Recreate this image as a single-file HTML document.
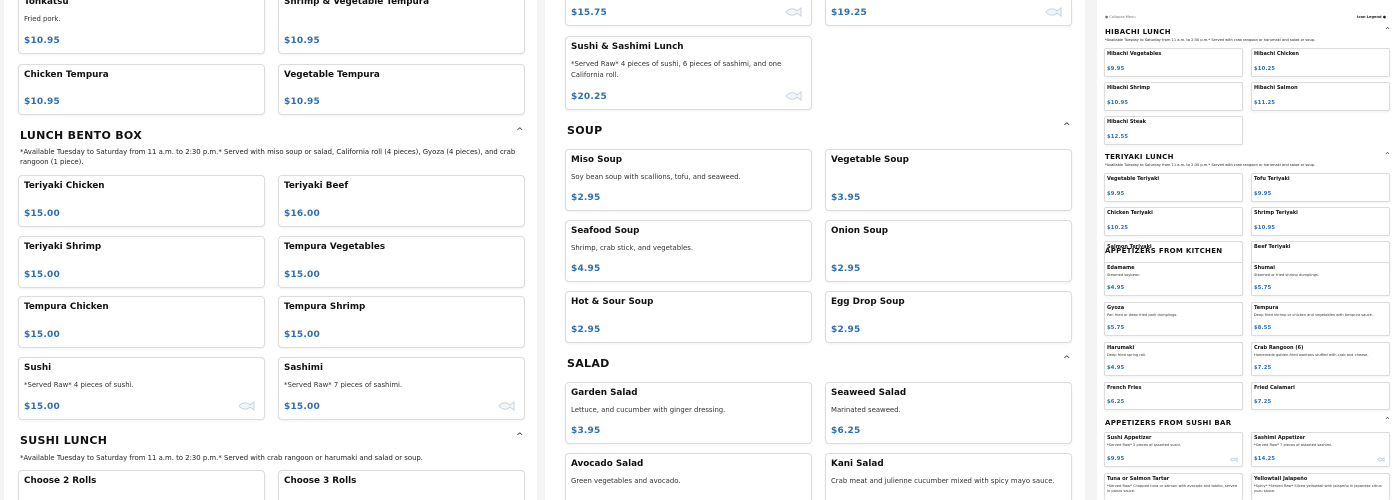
<!DOCTYPE html><html><head><meta charset="utf-8"><style>
*{margin:0;padding:0;box-sizing:border-box}
html,body{width:1400px;height:500px;overflow:hidden}
body{background:#f4f4f4;font-family:"DejaVu Sans","Liberation Sans",sans-serif;position:relative;color:#111}
#w{position:absolute;left:0;top:0;width:1400px;height:500px;overflow:hidden}
.p{position:absolute;top:0;height:500px;background:#fff}
.c{position:absolute;background:#fff;border:1px solid #dcdcdc;border-radius:4px;box-shadow:0 1px 2px rgba(0,0,0,.06)}
.c .t{position:absolute;left:5px;top:4px;font-size:8.8px;font-weight:bold;line-height:12px;white-space:nowrap}
.c .d{position:absolute;left:5px;top:22px;right:14px;font-size:6.9px;line-height:11px;color:#333}
.c .pr{position:absolute;left:5px;bottom:6px;font-size:9px;font-weight:bold;color:#2e6fae;line-height:12px;letter-spacing:.2px}
.c svg{position:absolute;right:8px;bottom:8px}
.h{position:absolute;font-size:11px;font-weight:bold;letter-spacing:.3px;white-space:nowrap;line-height:14px}
.cap{position:absolute;font-size:6.9px;line-height:10px;color:#222}
.ch{position:absolute;font-size:9px;color:#333}
.s .c{border-radius:2px}
.s .c .t{font-size:5px;left:2px;top:2px;line-height:7px}
.s .c .d{font-size:3.6px;left:2px;top:10px;line-height:5px;right:3px}
.s .c .pr{font-size:5.2px;left:2px;bottom:3px;line-height:7px}
.s .h{font-size:7px}
.s .cap{font-size:3.6px;line-height:5px}
</style></head><body><div id="w">
<div class="p" style="left:4px;width:533px"></div>
<div class="p" style="left:545px;width:540px"></div>
<div class="p" style="left:1097px;width:303px"></div>

<!-- left -->
<div class="c" style="left:18px;top:-9px;width:247px;height:63px"><div class="t">Tonkatsu</div><div class="d">Fried pork.</div><div class="pr">$10.95</div></div>
<div class="c" style="left:278px;top:-9px;width:247px;height:63px"><div class="t">Shrimp &amp; Vegetable Tempura</div><div class="pr">$10.95</div></div>
<div class="c" style="left:18px;top:64px;width:247px;height:51px"><div class="t">Chicken Tempura</div><div class="pr">$10.95</div></div>
<div class="c" style="left:278px;top:64px;width:247px;height:51px"><div class="t">Vegetable Tempura</div><div class="pr">$10.95</div></div>
<div class="h" style="left:20px;top:129px">LUNCH BENTO BOX</div><div class="ch" style="left:516px;top:127px">^</div>
<div class="cap" style="left:20px;top:147px;width:505px">*Available Tuesday to Saturday from 11 a.m. to 2:30 p.m.* Served with miso soup or salad, California roll (4 pieces), Gyoza (4 pieces), and crab rangoon (1 piece).</div>
<div class="c" style="left:18px;top:175px;width:247px;height:52px"><div class="t">Teriyaki Chicken</div><div class="pr">$15.00</div></div>
<div class="c" style="left:278px;top:175px;width:247px;height:52px"><div class="t">Teriyaki Beef</div><div class="pr">$16.00</div></div>
<div class="c" style="left:18px;top:236px;width:247px;height:52px"><div class="t">Teriyaki Shrimp</div><div class="pr">$15.00</div></div>
<div class="c" style="left:278px;top:236px;width:247px;height:52px"><div class="t">Tempura Vegetables</div><div class="pr">$15.00</div></div>
<div class="c" style="left:18px;top:296px;width:247px;height:52px"><div class="t">Tempura Chicken</div><div class="pr">$15.00</div></div>
<div class="c" style="left:278px;top:296px;width:247px;height:52px"><div class="t">Tempura Shrimp</div><div class="pr">$15.00</div></div>
<div class="c" style="left:18px;top:357px;width:247px;height:63px"><div class="t">Sushi</div><div class="d">*Served Raw* 4 pieces of sushi.</div><div class="pr">$15.00</div><svg width="18" height="10" viewBox="0 0 18 10"><path d="M1 5C4 1 9 1 12 4L16 1V9L12 6C9 9 4 9 1 5Z" fill="#f3f6f9" stroke="#c9d3dd"/></svg></div>
<div class="c" style="left:278px;top:357px;width:247px;height:63px"><div class="t">Sashimi</div><div class="d">*Served Raw* 7 pieces of sashimi.</div><div class="pr">$15.00</div><svg width="18" height="10" viewBox="0 0 18 10"><path d="M1 5C4 1 9 1 12 4L16 1V9L12 6C9 9 4 9 1 5Z" fill="#f3f6f9" stroke="#c9d3dd"/></svg></div>
<div class="h" style="left:20px;top:434px">SUSHI LUNCH</div><div class="ch" style="left:516px;top:432px">^</div>
<div class="cap" style="left:20px;top:453px">*Available Tuesday to Saturday from 11 a.m. to 2:30 p.m.* Served with crab rangoon or harumaki and salad or soup.</div>
<div class="c" style="left:18px;top:470px;width:247px;height:30px;border-bottom:0;border-radius:4px 4px 0 0"><div class="t">Choose 2 Rolls</div></div>
<div class="c" style="left:278px;top:470px;width:247px;height:30px;border-bottom:0;border-radius:4px 4px 0 0"><div class="t">Choose 3 Rolls</div></div>

<!-- middle -->
<div class="c" style="left:565px;top:0;width:247px;height:26px;border-top:0;border-radius:0 0 4px 4px"><div class="pr">$15.75</div><svg width="18" height="10" viewBox="0 0 18 10"><path d="M1 5C4 1 9 1 12 4L16 1V9L12 6C9 9 4 9 1 5Z" fill="#f3f6f9" stroke="#c9d3dd"/></svg></div>
<div class="c" style="left:825px;top:0;width:247px;height:26px;border-top:0;border-radius:0 0 4px 4px"><div class="pr">$19.25</div><svg width="18" height="10" viewBox="0 0 18 10"><path d="M1 5C4 1 9 1 12 4L16 1V9L12 6C9 9 4 9 1 5Z" fill="#f3f6f9" stroke="#c9d3dd"/></svg></div>
<div class="c" style="left:565px;top:36px;width:247px;height:74px"><div class="t">Sushi &amp; Sashimi Lunch</div><div class="d" style="right:20px">*Served Raw* 4 pieces of sushi, 6 pieces of sashimi, and one California roll.</div><div class="pr">$20.25</div><svg width="18" height="10" viewBox="0 0 18 10"><path d="M1 5C4 1 9 1 12 4L16 1V9L12 6C9 9 4 9 1 5Z" fill="#f3f6f9" stroke="#c9d3dd"/></svg></div>
<div class="h" style="left:567px;top:124px">SOUP</div><div class="ch" style="left:1063px;top:122px">^</div>
<div class="c" style="left:565px;top:149px;width:247px;height:62px"><div class="t">Miso Soup</div><div class="d">Soy bean soup with scallions, tofu, and seaweed.</div><div class="pr">$2.95</div></div>
<div class="c" style="left:825px;top:149px;width:247px;height:62px"><div class="t">Vegetable Soup</div><div class="pr">$3.95</div></div>
<div class="c" style="left:565px;top:220px;width:247px;height:62px"><div class="t">Seafood Soup</div><div class="d">Shrimp, crab stick, and vegetables.</div><div class="pr">$4.95</div></div>
<div class="c" style="left:825px;top:220px;width:247px;height:62px"><div class="t">Onion Soup</div><div class="pr">$2.95</div></div>
<div class="c" style="left:565px;top:291px;width:247px;height:52px"><div class="t">Hot &amp; Sour Soup</div><div class="pr">$2.95</div></div>
<div class="c" style="left:825px;top:291px;width:247px;height:52px"><div class="t">Egg Drop Soup</div><div class="pr">$2.95</div></div>
<div class="h" style="left:567px;top:357px">SALAD</div><div class="ch" style="left:1063px;top:355px">^</div>
<div class="c" style="left:565px;top:382px;width:247px;height:62px"><div class="t">Garden Salad</div><div class="d">Lettuce, and cucumber with ginger dressing.</div><div class="pr">$3.95</div></div>
<div class="c" style="left:825px;top:382px;width:247px;height:62px"><div class="t">Seaweed Salad</div><div class="d">Marinated seaweed.</div><div class="pr">$6.25</div></div>
<div class="c" style="left:565px;top:453px;width:247px;height:47px;border-bottom:0;border-radius:4px 4px 0 0"><div class="t">Avocado Salad</div><div class="d">Green vegetables and avocado.</div></div>
<div class="c" style="left:825px;top:453px;width:247px;height:47px;border-bottom:0;border-radius:4px 4px 0 0"><div class="t">Kani Salad</div><div class="d">Crab meat and julienne cucumber mixed with spicy mayo sauce.</div></div>

<!-- right small -->
<div class="s">
<div class="cap" style="left:1105px;top:15px;color:#777">● Collapse Menu</div>
<div class="cap" style="left:1357px;top:15px;font-weight:bold">Icon Legend ●</div>
<div class="h" style="left:1105px;top:25px">HIBACHI LUNCH</div><div class="cap" style="left:1385px;top:28px;font-size:6px">^</div>
<div class="cap" style="left:1105px;top:38px">*Available Tuesday to Saturday from 11 a.m. to 2:30 p.m.* Served with crab rangoon or harumaki and salad or soup.</div>
<div class="c" style="left:1104px;top:48px;width:139px;height:29px"><div class="t">Hibachi Vegetables</div><div class="pr">$9.95</div></div>
<div class="c" style="left:1251px;top:48px;width:139px;height:29px"><div class="t">Hibachi Chicken</div><div class="pr">$10.25</div></div>
<div class="c" style="left:1104px;top:82px;width:139px;height:29px"><div class="t">Hibachi Shrimp</div><div class="pr">$10.95</div></div>
<div class="c" style="left:1251px;top:82px;width:139px;height:29px"><div class="t">Hibachi Salmon</div><div class="pr">$11.25</div></div>
<div class="c" style="left:1104px;top:116px;width:139px;height:29px"><div class="t">Hibachi Steak</div><div class="pr">$12.55</div></div>
<div class="h" style="left:1105px;top:150px">TERIYAKI LUNCH</div><div class="cap" style="left:1385px;top:153px;font-size:6px">^</div>
<div class="cap" style="left:1105px;top:163px">*Available Tuesday to Saturday from 11 a.m. to 2:30 p.m.* Served with crab rangoon or harumaki and salad or soup.</div>
<div class="c" style="left:1104px;top:173px;width:139px;height:29px"><div class="t">Vegetable Teriyaki</div><div class="pr">$9.95</div></div>
<div class="c" style="left:1251px;top:173px;width:139px;height:29px"><div class="t">Tofu Teriyaki</div><div class="pr">$9.95</div></div>
<div class="c" style="left:1104px;top:207px;width:139px;height:29px"><div class="t">Chicken Teriyaki</div><div class="pr">$10.25</div></div>
<div class="c" style="left:1251px;top:207px;width:139px;height:29px"><div class="t">Shrimp Teriyaki</div><div class="pr">$10.95</div></div>
<div class="c" style="left:1104px;top:241px;width:139px;height:29px"><div class="t">Salmon Teriyaki</div></div>
<div class="c" style="left:1251px;top:241px;width:139px;height:29px"><div class="t">Beef Teriyaki</div></div>
<div class="h" style="left:1105px;top:244px">APPETIZERS FROM KITCHEN</div>
<div class="c" style="left:1104px;top:262px;width:139px;height:34px"><div class="t">Edamame</div><div class="d">Steamed soybean.</div><div class="pr">$4.95</div></div>
<div class="c" style="left:1251px;top:262px;width:139px;height:34px"><div class="t">Shumai</div><div class="d">Steamed or fried shrimp dumplings.</div><div class="pr">$5.75</div></div>
<div class="c" style="left:1104px;top:302px;width:139px;height:34px"><div class="t">Gyoza</div><div class="d">Pan fried or deep fried pork dumplings.</div><div class="pr">$5.75</div></div>
<div class="c" style="left:1251px;top:302px;width:139px;height:34px"><div class="t">Tempura</div><div class="d">Deep fried shrimp or chicken and vegetables with tempura sauce.</div><div class="pr">$8.55</div></div>
<div class="c" style="left:1104px;top:342px;width:139px;height:34px"><div class="t">Harumaki</div><div class="d">Deep fried spring roll.</div><div class="pr">$4.95</div></div>
<div class="c" style="left:1251px;top:342px;width:139px;height:34px"><div class="t">Crab Rangoon (6)</div><div class="d">Homemade golden-fried wontons stuffed with crab and cheese.</div><div class="pr">$7.25</div></div>
<div class="c" style="left:1104px;top:382px;width:139px;height:28px"><div class="t">French Fries</div><div class="pr">$6.25</div></div>
<div class="c" style="left:1251px;top:382px;width:139px;height:28px"><div class="t">Fried Calamari</div><div class="pr">$7.25</div></div>
<div class="h" style="left:1105px;top:416px">APPETIZERS FROM SUSHI BAR</div><div class="cap" style="left:1385px;top:418px;font-size:6px">^</div>
<div class="c" style="left:1104px;top:432px;width:139px;height:35px"><div class="t">Sushi Appetizer</div><div class="d">*Served Raw* 5 pieces of assorted sushi.</div><div class="pr">$9.95</div><svg width="8" height="5" viewBox="0 0 18 10" style="right:4px;bottom:4px"><path d="M1 5C4 1 9 1 12 4L16 1V9L12 6C9 9 4 9 1 5Z" fill="#f3f6f9" stroke="#c9d3dd" stroke-width="2"/></svg></div>
<div class="c" style="left:1251px;top:432px;width:139px;height:35px"><div class="t">Sashimi Appetizer</div><div class="d">*Served Raw* 7 pieces of assorted sashimi.</div><div class="pr">$14.25</div><svg width="8" height="5" viewBox="0 0 18 10" style="right:4px;bottom:4px"><path d="M1 5C4 1 9 1 12 4L16 1V9L12 6C9 9 4 9 1 5Z" fill="#f3f6f9" stroke="#c9d3dd" stroke-width="2"/></svg></div>
<div class="c" style="left:1104px;top:473px;width:139px;height:27px;border-bottom:0"><div class="t">Tuna or Salmon Tartar</div><div class="d">*Served Raw* Chopped tuna or salmon with avocado and tobiko, served in ponzu sauce.</div></div>
<div class="c" style="left:1251px;top:473px;width:139px;height:27px;border-bottom:0"><div class="t">Yellowtail Jalapeño</div><div class="d">*Spicy* *Served Raw* Sliced yellowtail with jalapeño in Japanese citrus yuzu sauce.</div></div>
</div>
</div></body></html>
